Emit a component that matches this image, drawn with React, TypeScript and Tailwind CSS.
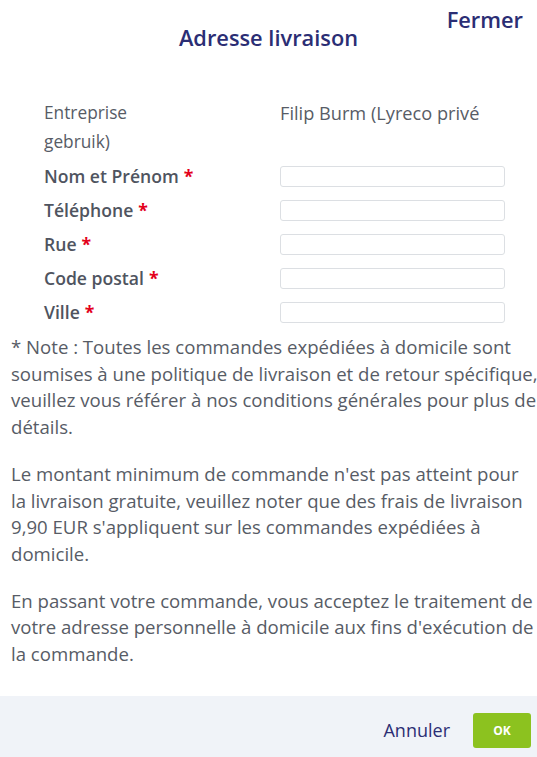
import React from "react";

const FIELDS = ["Nom et Prénom", "Téléphone", "Rue", "Code postal", "Ville"];

const NOTES = [
  [
    "* Note : Toutes les commandes expédiées à domicile sont",
    "soumises à une politique de livraison et de retour spécifique,",
    "veuillez vous référer à nos conditions générales pour plus de",
    "détails.",
  ],
  [
    "Le montant minimum de commande n'est pas atteint pour",
    "la livraison gratuite, veuillez noter que des frais de livraison",
    "9,90 EUR s'appliquent sur les commandes expédiées à",
    "domicile.",
  ],
  [
    "En passant votre commande, vous acceptez le traitement de",
    "votre adresse personnelle à domicile aux fins d'exécution de",
    "la commande.",
  ],
];

export default function App() {
  return (
    <div
      className="relative w-[537px] h-[757px] bg-white flex flex-col text-[#575c66]"
      style={{ fontFamily: '"Open Sans", "Noto Sans", sans-serif' }}
    >
      {/* close link */}
      <button className="absolute top-[5px] right-[14px] text-[21.8px] font-semibold leading-[30px] text-[#2b2e74]">
        Fermer
      </button>

      <h1 className="pt-[22px] text-center text-[21.8px] font-semibold leading-[32px] text-[#2b2e74]">
        Adresse livraison
      </h1>

      <div className="pl-[11px] pr-[2px] flex-1">
        {/* form */}
        <div className="mt-[44px] pl-[33px] grid grid-cols-[236px_225px]">
          <div className="text-[17.3px] leading-[29px]">
            Entreprise
            <br />
            gebruik)
          </div>
          <div className="text-[18.2px] leading-[29px] pt-[1px] whitespace-nowrap">
            Filip Burm (Lyreco privé
          </div>

          <div className="col-span-2 h-[3px]" />

          {FIELDS.map((f) => (
            <React.Fragment key={f}>
              <div className="h-[34px] flex items-center text-[17.6px] font-semibold text-[#4f5460] whitespace-nowrap">
                {f} <span className="ml-[5px] text-[#e3001b] font-bold">*</span>
              </div>
              <div className="h-[34px] flex items-center">
                <input className="w-[225px] h-[21px] border border-[#dcdfe3] rounded-[3px] bg-white" />
              </div>
            </React.Fragment>
          ))}
        </div>

        {/* notes */}
        <div className="mt-[5px] text-[18.6px] leading-[26.7px] space-y-[20px]">
          {NOTES.map((lines, i) => (
            <p key={i}>
              {lines.map((l) => (
                <span key={l} className="block whitespace-nowrap">
                  {l}
                </span>
              ))}
            </p>
          ))}
        </div>
      </div>

      {/* footer */}
      <div className="h-[61px] bg-[#f0f3f8] flex items-start justify-end gap-[23px] pr-[6px] pt-[17px]">
        <button className="text-[18px] text-[#2b2e74] leading-[35px]">Annuler</button>
        <button className="w-[58px] h-[35px] rounded-[3px] bg-[#8cc21f] text-white text-[12px] font-bold">
          OK
        </button>
      </div>
    </div>
  );
}
